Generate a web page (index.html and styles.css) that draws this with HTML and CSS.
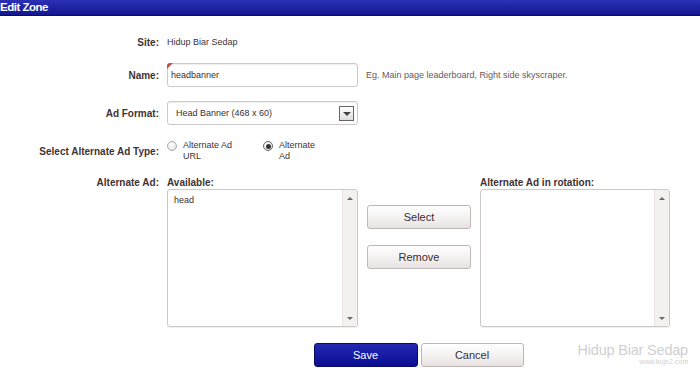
FILE: index.html
```html
<!DOCTYPE html>
<html>

<head lang="en">
    <meta charset="UTF-8">
    <title>Edit Zone</title>
    <link rel="stylesheet" href="styles.css">
</head>

<body>
    <div class="titlebar">Edit Zone</div>

    <div class="form">
        <div class="row row-site">
            <span class="lbl">Site:</span>
            <span class="txt">Hidup Biar Sedap</span>
        </div>

        <div class="row row-field">
            <span class="lbl">Name:</span>
            <div class="field">
                <div class="input"><span class="flag"></span>headbanner</div>
                <span class="hint">Eg. Main page leaderboard, Right side skyscraper.</span>
            </div>
        </div>

        <div class="row row-field row-format">
            <span class="lbl">Ad Format:</span>
            <div class="field">
                <div class="select">
                    <span>Head Banner (468 x 60)</span>
                    <span class="drop"><i></i></span>
                </div>
            </div>
        </div>

        <div class="row row-radio">
            <span class="lbl">Select Alternate Ad Type:</span>
            <div class="radios">
                <div class="opt"><span class="radio"></span><span class="opt-txt">Alternate Ad<br>URL</span></div>
                <div class="opt"><span class="radio on"></span><span class="opt-txt">Alternate<br>Ad</span></div>
            </div>
        </div>

        <div class="row row-lists">
            <span class="lbl">Alternate Ad:</span>
            <div class="lists">
                <div class="col">
                    <div class="col-head">Available:</div>
                    <div class="listbox">
                        <div class="items">head</div>
                        <div class="scroll"><i class="up"></i><i class="down"></i></div>
                    </div>
                </div>
                <div class="moves">
                    <button class="btn">Select</button>
                    <button class="btn">Remove</button>
                </div>
                <div class="col">
                    <div class="col-head">Alternate Ad in rotation:</div>
                    <div class="listbox">
                        <div class="items"></div>
                        <div class="scroll"><i class="up"></i><i class="down"></i></div>
                    </div>
                </div>
            </div>
        </div>

        <div class="row row-actions">
            <span></span>
            <div class="actions">
                <button class="btn btn-save">Save</button>
                <button class="btn btn-cancel">Cancel</button>
            </div>
        </div>
    </div>

    <div class="mark">
        <div class="mark-big">Hidup Biar Sedap</div>
        <div class="mark-small">www.kuje2.com</div>
    </div>
</body>

</html>
```

FILE: styles.css
```css
body {
    margin: 0;
    padding: 0;
    background: #fff;
    font-family: "Liberation Sans", Arial, sans-serif;
    color: #3f3333;
    position: relative;
    height: 381px;
    overflow: hidden;
}

.titlebar {
    height: 15px;
    line-height: 15px;
    background: linear-gradient(to bottom, #2b30b6, #12168f);
    border-bottom: 1px solid #0a0c5c;
    color: #fff;
    font-weight: bold;
    font-size: 11.5px;
    letter-spacing: -0.5px;
    white-space: nowrap;
}

.form {
    width: 670px;
}

.row {
    display: grid;
    grid-template-columns: 159px 1fr;
    column-gap: 8px;
    align-items: center;
}

.lbl {
    text-align: right;
    font-weight: bold;
    font-size: 10px;
    white-space: nowrap;
}

.txt {
    font-size: 9px;
}

.row-site {
    margin-top: 19px;
    height: 14px;
}

.row-field {
    margin-top: 14px;
    height: 24px;
}

.field {
    display: flex;
    align-items: center;
    gap: 8px;
}

.input,
.select {
    box-sizing: border-box;
    width: 191px;
    height: 24px;
    border: 1px solid #cfc8c8;
    border-radius: 3px;
    box-shadow: inset 0 1px 1px #eee;
    font-size: 9px;
    display: flex;
    align-items: center;
    position: relative;
}

.input {
    padding-left: 3px;
    color: #3a2f2f;
}

.flag {
    position: absolute;
    left: -1px;
    top: -1px;
    width: 0;
    height: 0;
    border-top: 6px solid #c4504c;
    border-right: 6px solid transparent;
    border-top-left-radius: 3px;
}

.hint {
    font-size: 9px;
    color: #6a5858;
    white-space: nowrap;
}

.select {
    padding-left: 8px;
    justify-content: space-between;
    color: #3a2f2f;
}

.drop {
    box-sizing: border-box;
    width: 15px;
    height: 15px;
    margin-right: 3px;
    border: 1px solid #666;
    background: linear-gradient(to bottom, #fff, #ddd);
    display: flex;
    align-items: center;
    justify-content: center;
}

.drop i {
    width: 0;
    height: 0;
    border-left: 4px solid transparent;
    border-right: 4px solid transparent;
    border-top: 4px solid #444;
    margin-top: 1px;
}

.row-radio {
    margin-top: 15px;
    height: 22px;
}

.radios {
    display: flex;
    align-items: flex-start;
}

.opt {
    display: flex;
    align-items: flex-start;
    gap: 6px;
    font-size: 9px;
    line-height: 11px;
}

.opt:first-child {
    width: 96px;
}

.radio {
    box-sizing: border-box;
    width: 10px;
    height: 10px;
    margin-top: 1px;
    border: 1px solid #aaa;
    border-radius: 50%;
    background: radial-gradient(circle at 40% 35%, #fff, #ddd);
    display: flex;
    align-items: center;
    justify-content: center;
}

.radio.on {
    border-color: #666;
}

.radio.on::after {
    content: "";
    width: 5px;
    height: 5px;
    border-radius: 50%;
    background: #333;
}

.row-lists {
    margin-top: 15px;
    align-items: start;
}

.row-lists .lbl {
    line-height: 12px;
}

.lists {
    display: flex;
    gap: 9px;
}

.col-head {
    font-weight: bold;
    font-size: 10px;
    line-height: 12px;
    white-space: nowrap;
}

.listbox {
    box-sizing: border-box;
    width: 191px;
    height: 138px;
    border: 1px solid #cfc8c8;
    border-radius: 3px;
    display: flex;
    background: #fff;
    box-shadow: 0 1px 1px #eee;
}

.col:last-child .listbox {
    width: 190px;
}

.items {
    flex: 1;
    font-size: 9px;
    padding: 5px 0 0 6px;
    color: #3a2f2f;
}

.scroll {
    width: 14px;
    background: #f4f0f0;
    border-left: 1px solid #ece6e6;
    display: flex;
    flex-direction: column;
    justify-content: space-between;
    align-items: center;
    padding: 7px 0 6px;
}

.scroll i {
    width: 0;
    height: 0;
    border-left: 3px solid transparent;
    border-right: 3px solid transparent;
}

.scroll .up {
    border-bottom: 3px solid #666;
}

.scroll .down {
    border-top: 3px solid #666;
}

.moves {
    width: 104px;
    padding-top: 28px;
    display: flex;
    flex-direction: column;
    gap: 16px;
}

.btn {
    box-sizing: border-box;
    width: 104px;
    height: 24px;
    border: 1px solid #bfb6b6;
    border-radius: 3px;
    background: linear-gradient(to bottom, #fff, #f3efef 60%, #e8e3e3);
    font-family: "Liberation Sans", Arial, sans-serif;
    font-size: 11px;
    color: #3a3030;
    padding: 0;
}

.row-actions {
    margin-top: 16px;
}

.actions {
    display: flex;
    justify-content: center;
    gap: 3px;
}

.btn-save {
    background: linear-gradient(to bottom, #2428b0, #0b0e94);
    border-color: #0a0c60;
    color: #fff;
}

.btn-cancel {
    width: 103px;
}

.mark {
    position: absolute;
    right: 12px;
    bottom: 15px;
    text-align: right;
    color: #d0d0d0;
}

.mark-big {
    font-size: 14.5px;
    line-height: 15px;
    letter-spacing: -0.2px;
}

.mark-small {
    font-size: 7px;
    line-height: 8px;
}
```
